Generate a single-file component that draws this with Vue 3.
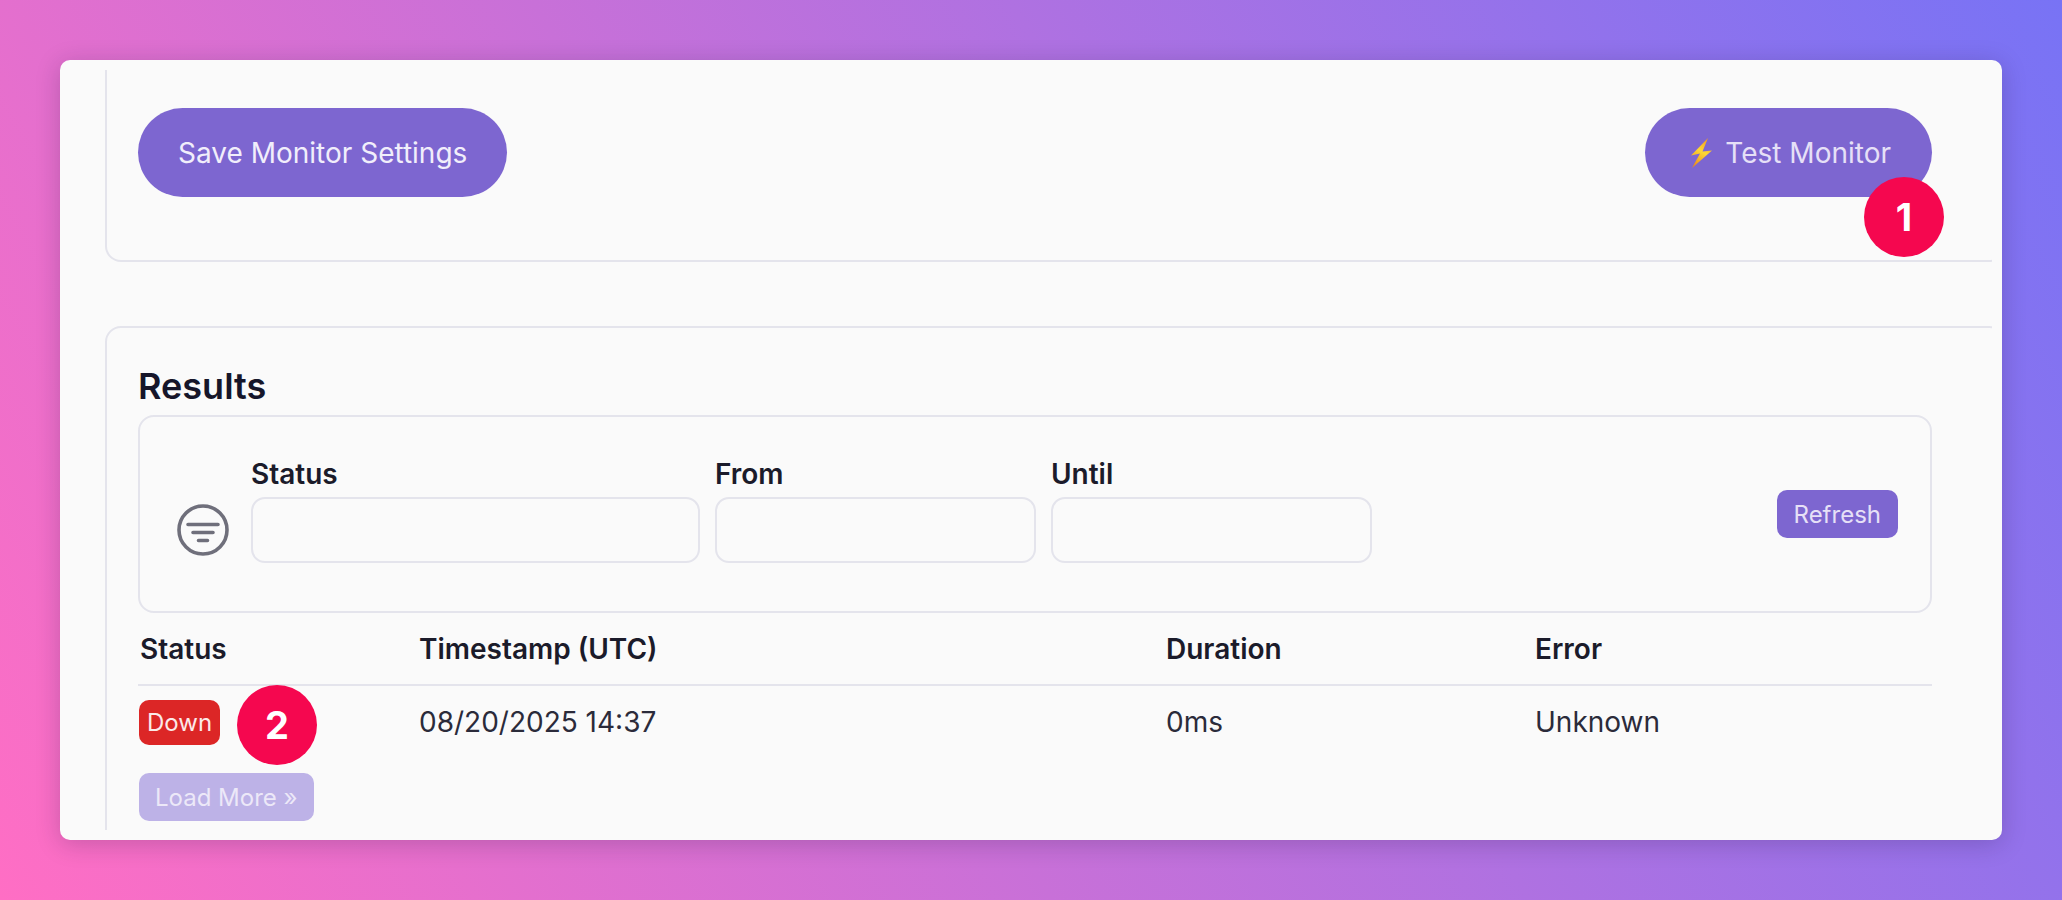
<template>
  <div class="stage">
    <div class="window">
      <div class="viewport">
        <section class="panel panel-settings">
          <div class="actions">
            <button class="btn-pill">Save Monitor Settings</button>
            <button class="btn-pill btn-test">
              <svg class="bolt" viewBox="0 0 21 30" width="21" height="30" aria-hidden="true">
                <defs>
                  <linearGradient id="boltFill" x1="0.7" y1="0" x2="0.3" y2="1">
                    <stop offset="0" stop-color="#f29a1f" />
                    <stop offset="0.45" stop-color="#fdd835" />
                    <stop offset="1" stop-color="#ec8a1a" />
                  </linearGradient>
                </defs>
                <path d="M17 0 L0 17.5 L9 15.5 L1 30 L21 12.5 L11.5 13.5 Z" fill="url(#boltFill)" />
              </svg>
              <span>Test Monitor</span>
            </button>
          </div>
        </section>

        <section class="panel panel-results">
          <h2 class="results-title">Results</h2>

          <div class="filter-box">
            <div class="filter-fields">
              <svg class="filter-icon" viewBox="0 0 52 52" width="52" height="52" fill="none" stroke="#6f6f7b" stroke-width="3.6" stroke-linecap="round" aria-hidden="true">
                <circle cx="26" cy="26" r="24" />
                <path d="M11 20.5H41M16 28.5H36M21.5 36.5H30.5" />
              </svg>
              <label v-for="field in filters" :key="field.name" class="field" :class="field.cls">
                <span class="field-label">{{ field.name }}</span>
                <span class="field-input"></span>
              </label>
            </div>
            <button class="btn-small btn-refresh">Refresh</button>
          </div>

          <div class="table-row table-head">
            <div v-for="col in columns" :key="col" class="cell">{{ col }}</div>
          </div>
          <div class="table-row table-body">
            <div class="cell cell-status"><span class="status-down">Down</span></div>
            <div class="cell">08/20/2025 14:37</div>
            <div class="cell">0ms</div>
            <div class="cell">Unknown</div>
          </div>

          <button class="btn-small btn-more">Load More »</button>
        </section>
      </div>
    </div>

    <div class="step step-one">1</div>
    <div class="step step-two">2</div>
  </div>
</template>

<script setup>
const filters = [
  { name: 'Status', cls: 'field-status' },
  { name: 'From', cls: 'field-date' },
  { name: 'Until', cls: 'field-date' }
]

const columns = ['Status', 'Timestamp (UTC)', 'Duration', 'Error']
</script>

<style scoped>
.stage {
  position: relative;
  width: 2062px;
  height: 900px;
  padding: 60px;
  box-sizing: border-box;
  overflow: hidden;
  background: linear-gradient(60deg, #ff6ec4, #7873f5);
  font-family: Inter, "Liberation Sans", sans-serif;
  color: #1b1b2a;
}

.window {
  height: 780px;
  padding: 10px;
  box-sizing: border-box;
  background: #fafafa;
  border-radius: 10px;
  box-shadow: 0 4px 24px rgba(30, 20, 60, 0.22);
}

.viewport {
  height: 760px;
  overflow: hidden;
}

.panel {
  width: 1900px;
  margin-left: 35px;
  box-sizing: border-box;
  border: 2px solid #e4e4ec;
  border-radius: 16px;
  padding-left: 31px;
  padding-right: 71px;
}

.panel-settings {
  height: 192px;
  border-top: none;
  border-top-left-radius: 0;
  border-top-right-radius: 0;
  padding-top: 38px;
}

.panel-results {
  height: 600px;
  margin-top: 64px;
}

.actions {
  display: flex;
  justify-content: space-between;
}

button {
  font-family: inherit;
  border: none;
  color: #f1eefb;
}

.btn-pill {
  height: 89px;
  padding: 0 40px;
  border-radius: 45px;
  background: #7d66d0;
  font-size: 28px;
}

.btn-test {
  display: flex;
  align-items: center;
  gap: 13px;
  padding: 0 41px 0 46px;
  color: #e6e0f7;
}

.bolt {
  flex: none;
}

.results-title {
  margin: 38px 0 9px;
  font-size: 36px;
  line-height: 40px;
  font-weight: 600;
  color: #16162a;
}

.filter-box {
  display: flex;
  justify-content: space-between;
  height: 198px;
  box-sizing: border-box;
  padding: 41px 32px 48px 37px;
  border: 2px solid #e4e4ec;
  border-radius: 16px;
}

.filter-fields {
  display: flex;
  align-items: flex-end;
  gap: 15px;
}

.filter-icon {
  margin: 0 7px 7px 0;
}

.field {
  display: flex;
  flex-direction: column;
}

.field-status {
  width: 449px;
}

.field-date {
  width: 321px;
}

.field-label {
  margin-bottom: 6px;
  font-size: 28px;
  line-height: 34px;
  font-weight: 600;
}

.field-input {
  height: 66px;
  box-sizing: border-box;
  border: 2px solid #e4e4ec;
  border-radius: 14px;
}

.btn-small {
  height: 48px;
  padding: 0 16px;
  border-radius: 10px;
  background: #7d66d0;
  font-size: 24px;
}

.btn-refresh {
  margin-top: 32px;
  padding: 0 17px;
  color: #e6e0f7;
}

.table-row {
  display: grid;
  grid-template-columns: 279px 747px 369px 1fr;
  align-items: center;
  height: 72px;
  font-size: 28px;
  color: #2b2b3a;
}

.table-head {
  height: 71px;
  font-weight: 600;
  color: #1b1b2a;
  border-bottom: 2px solid #e4e4ec;
}

.cell {
  padding-left: 2px;
}

.cell-status {
  padding-left: 1px;
}

.status-down {
  display: inline-block;
  padding: 0 8px;
  height: 45px;
  line-height: 45px;
  border-radius: 10px;
  background: #dc2626;
  color: #fbe9e9;
  font-size: 24px;
}

.btn-more {
  display: block;
  margin: 15px 0 0 1px;
  background: #bdb2e7;
  color: #ece8f8;
}

.step {
  position: absolute;
  width: 80px;
  height: 80px;
  border-radius: 50%;
  background: #f5074f;
  color: #fff;
  font-size: 38px;
  font-weight: 700;
  line-height: 80px;
  text-align: center;
}

.step-one {
  left: 1864px;
  top: 177px;
}

.step-two {
  left: 237px;
  top: 685px;
}
</style>
